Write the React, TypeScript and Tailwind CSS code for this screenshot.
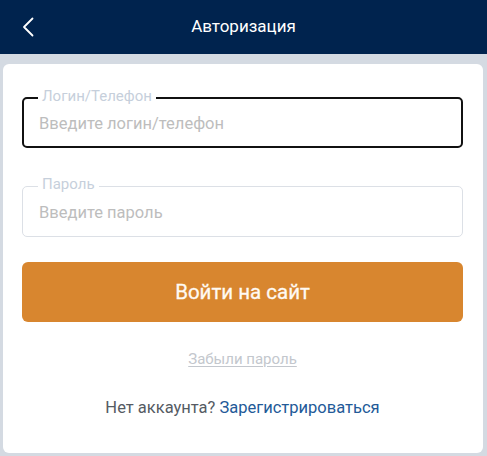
import React from 'react';

const font = { fontFamily: 'Roboto, "Noto Sans", sans-serif' };

const Field: React.FC<{ label: string; placeholder: string; active?: boolean; type?: string }> = ({
  label,
  placeholder,
  active,
  type = 'text',
}) => (
  <div
    className={`relative h-[51px] rounded-[5px] flex items-center pt-[3px] ${
      active ? 'border-2 border-[#111] px-[15px]' : 'border border-[#dce0e6] px-[16px]'
    }`}
  >
    <span
      className={`absolute -top-[12px] bg-white px-1 text-[15px] leading-[18px] text-[#c6cfdb] ${
        active ? 'left-[14px]' : 'left-[15px]'
      }`}
    >
      {label}
    </span>
    <input
      type={type}
      placeholder={placeholder}
      className="w-full bg-transparent outline-none text-[16.5px] text-[#333] placeholder:text-[#bdbdbd]"
    />
  </div>
);

export default function App() {
  return (
    <div className="w-[487px] h-[456px] bg-[#d4dae2] flex flex-col" style={font}>
      <header className="h-[54px] bg-[#00234e] flex items-center relative shrink-0">
        <button className="absolute left-[18px] top-[15px] w-[20px] h-[24px] flex items-center justify-center">
          <svg width="12" height="20" viewBox="0 0 12 20" fill="none">
            <path d="M10.5 1.5 L2 10 L10.5 18.5" stroke="white" strokeWidth="1.8" strokeLinecap="round" strokeLinejoin="round" />
          </svg>
        </button>
        <h1 className="w-full text-center text-white text-[17px]">Авторизация</h1>
      </header>

      <div className="flex-1 pl-[3px] pr-[4px] pt-[10px] pb-[3px]">
        <div className="h-full bg-white rounded-[6px] pl-[19px] pr-[20px] pt-[33px] flex flex-col">
          <Field label="Логин/Телефон" placeholder="Введите логин/телефон" active />
          <div className="h-[38px]" />
          <Field label="Пароль" placeholder="Введите пароль" type="password" />
          <button
            className="mt-[25px] h-[60px] rounded-[6px] bg-[#d8862f] text-[#fffaf3] text-[20.5px] font-normal"
            style={{ WebkitTextStroke: '0.3px #fffaf3' }}
          >
            Войти на сайт
          </button>
          <a className="mt-[26px] self-center text-[15px] text-[#c3c7cd] underline underline-offset-2">
            Забыли пароль
          </a>
          <p className="mt-[25px] text-center text-[16.5px] text-[#555b63]">
            Нет аккаунта? <a className="text-[#235a98]">Зарегистрироваться</a>
          </p>
        </div>
      </div>
    </div>
  );
}
